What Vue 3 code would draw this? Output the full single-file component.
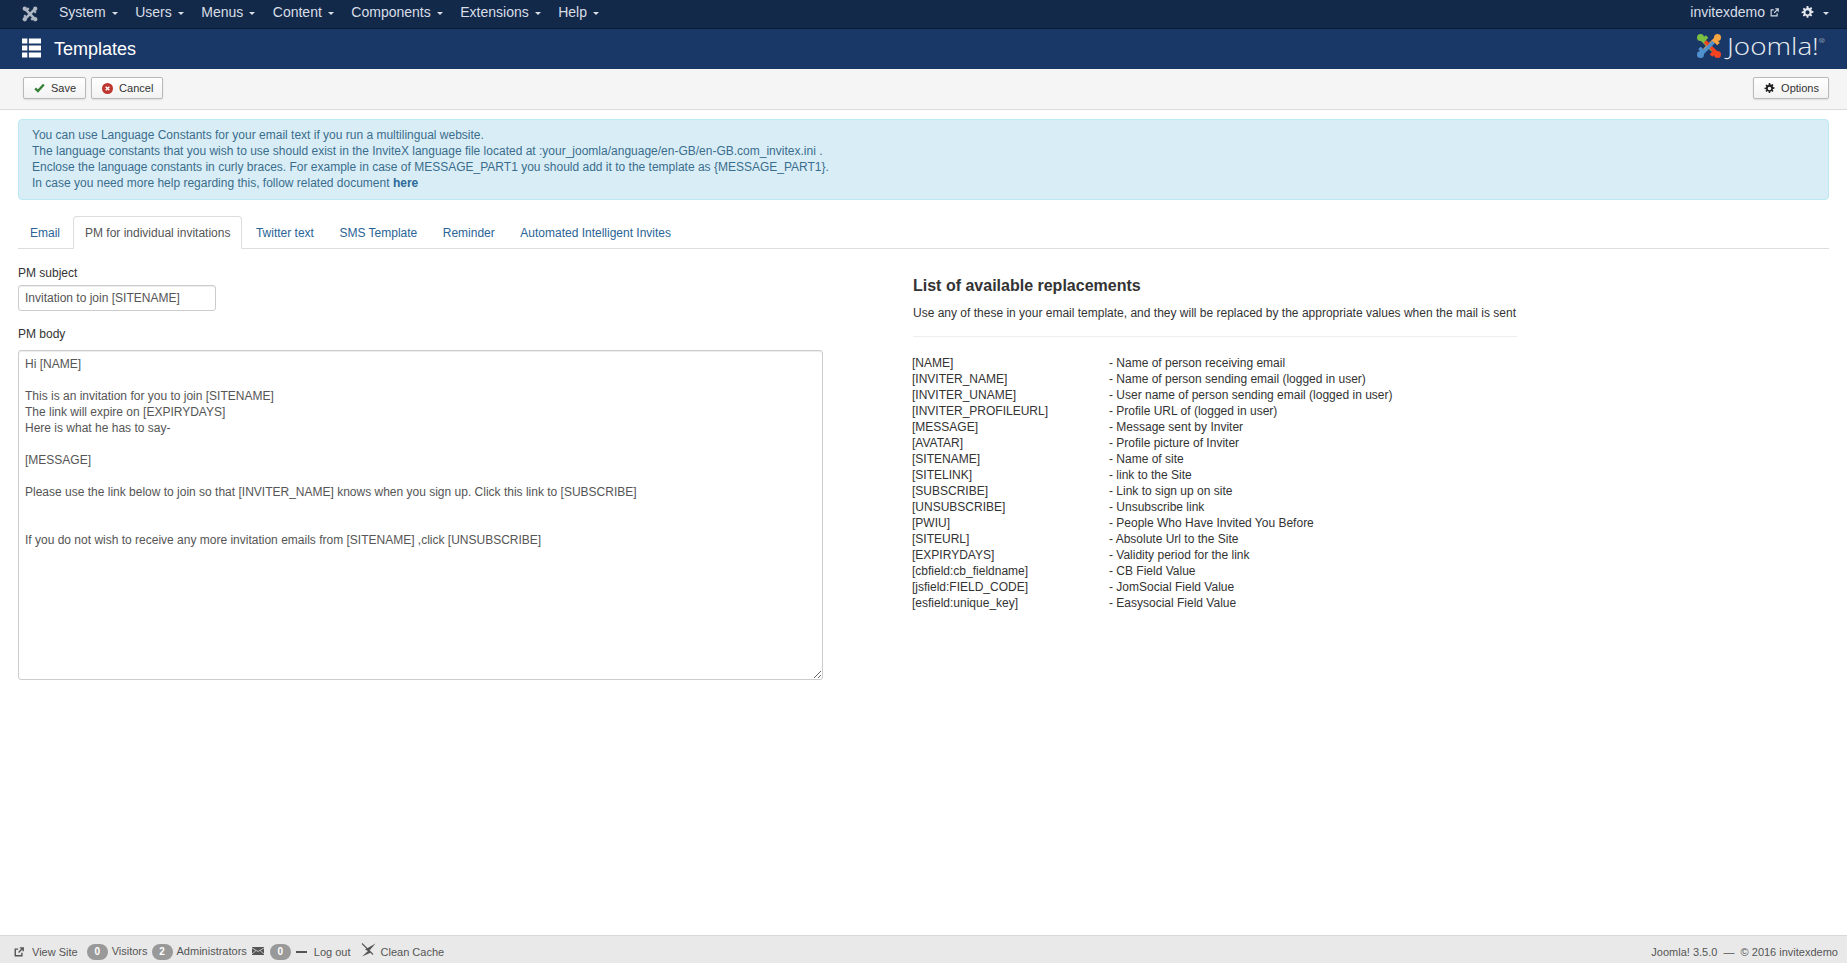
<script setup>
const menus = ['System', 'Users', 'Menus', 'Content', 'Components', 'Extensions', 'Help']
const tabs = ['Email', 'PM for individual invitations', 'Twitter text', 'SMS Template', 'Reminder', 'Automated Intelligent Invites']
const body = `Hi [NAME]

This is an invitation for you to join [SITENAME]
The link will expire on [EXPIRYDAYS]
Here is what he has to say-

[MESSAGE]

Please use the link below to join so that [INVITER_NAME] knows when you sign up. Click this link to [SUBSCRIBE]


If you do not wish to receive any more invitation emails from [SITENAME] ,click [UNSUBSCRIBE]`
const reps = [
  ['[NAME]', '- Name of person receiving email'],
  ['[INVITER_NAME]', '- Name of person sending email (logged in user)'],
  ['[INVITER_UNAME]', '- User name of person sending email (logged in user)'],
  ['[INVITER_PROFILEURL]', '- Profile URL of (logged in user)'],
  ['[MESSAGE]', '- Message sent by Inviter'],
  ['[AVATAR]', '- Profile picture of Inviter'],
  ['[SITENAME]', '- Name of site'],
  ['[SITELINK]', '- link to the Site'],
  ['[SUBSCRIBE]', '- Link to sign up on site'],
  ['[UNSUBSCRIBE]', '- Unsubscribe link'],
  ['[PWIU]', '- People Who Have Invited You Before'],
  ['[SITEURL]', '- Absolute Url to the Site'],
  ['[EXPIRYDAYS]', '- Validity period for the link'],
  ['[cbfield:cb_fieldname]', '- CB Field Value'],
  ['[jsfield:FIELD_CODE]', '- JomSocial Field Value'],
  ['[esfield:unique_key]', '- Easysocial Field Value'],
]
const gear = 'M6.1 0h1.800l.3 1.800 1.100.5L10.800 1.200l1.300 1.300-1.100 1.500.5 1.100 1.800.3v1.800l-1.800.3-.5 1.100 1.100 1.500-1.300 1.300-1.500-1.100-1.100.5-.3 1.800H6.100l-.3-1.800-1.100-.5-1.500 1.100-1.300-1.300 1.100-1.500-.5-1.100L.7 7.800V6l1.800-.3.5-1.100-1.100-1.500 1.300-1.300 1.500 1.100 1.100-.5z'
const hole = 'M7 4.700a2.200 2.200 0 1 0 0 4.400 2.200 2.200 0 0 0 0-4.400z'
const logoArms = [
  { color: '#7ac143', angle: 0 },
  { color: '#f9a541', angle: 90 },
  { color: '#f44321', angle: 180 },
  { color: '#5091cd', angle: 270 },
]
</script>

<template>
  <div class="page">
    <nav class="topnav">
      <svg class="brand" viewBox="0 0 26 26" width="16" height="16" aria-hidden="true">
        <g v-for="a in logoArms" :key="a.angle" :transform="`rotate(${a.angle} 13 13)`">
          <path d="M11 3.500L7 7.500l10 10" fill="none" stroke="#aeb7c3" stroke-width="3.600" />
          <circle cx="4.500" cy="4.500" r="3.500" fill="#aeb7c3" />
        </g>
      </svg>
      <ul class="menu">
        <li v-for="m in menus" :key="m">{{ m }}<span class="caret"></span></li>
      </ul>
      <div class="nav-right">
        <span class="user">invitexdemo
          <svg viewBox="0 0 12 12" width="9" height="9" aria-hidden="true"><path d="M9.500 7v3.500h-8v-8H5M7 1h4v4M11 1L5.500 6.500" fill="none" stroke="#d5dbe3" stroke-width="1.500" /></svg>
        </span>
        <span class="navgear">
          <svg viewBox="0 0 14 14" width="13" height="13" aria-hidden="true"><path fill="#e4e8ee" fill-rule="evenodd" :d="gear + hole" /></svg>
          <span class="caret"></span>
        </span>
      </div>
    </nav>

    <header class="titlebar">
      <svg class="listicon" viewBox="0 0 16 16" width="19" height="20" aria-hidden="true">
        <path fill="#fff" d="M0 0h4.500v4.300H0zM5.800 0H16v4.300H5.800zM0 5.800h4.500v4.400H0zM5.800 5.800H16v4.400H5.800zM0 11.700h4.500V16H0zM5.800 11.700H16V16H5.800z" />
      </svg>
      <h1>Templates</h1>
      <div class="logo">
        <svg viewBox="0 0 26 26" width="26" height="26" aria-hidden="true">
          <g v-for="a in logoArms" :key="a.angle" :transform="`rotate(${a.angle} 13 13)`">
            <path d="M11 3.500L7 7.500l10 10" fill="none" :stroke="a.color" stroke-width="3.600" />
            <circle cx="4.500" cy="4.500" r="3.500" :fill="a.color" />
          </g>
        </svg>
        <span class="logotext">Joomla!<sup>®</sup></span>
      </div>
    </header>

    <div class="toolbar">
      <button class="btn">
        <svg viewBox="0 0 14 12" width="11" height="10" aria-hidden="true"><path d="M1.500 6.500L5 10l7.500-8.500" fill="none" stroke="#378137" stroke-width="3" /></svg>
        Save
      </button>
      <button class="btn">
        <svg viewBox="0 0 12 12" width="11" height="11" aria-hidden="true"><circle cx="6" cy="6" r="6" fill="#bd362f" /><path d="M4 4l4 4M8 4l-4 4" stroke="#fff" stroke-width="1.600" /></svg>
        Cancel
      </button>
      <button class="btn options">
        <svg viewBox="0 0 14 14" width="11" height="11" aria-hidden="true"><path fill="#222" fill-rule="evenodd" :d="gear + hole" /></svg>
        Options
      </button>
    </div>

    <main class="content">
      <div class="alert">
        <div>You can use Language Constants for your email text if you run a multilingual website.</div>
        <div>The language constants that you wish to use should exist in the InviteX language file located at :your_joomla/anguage/en-GB/en-GB.com_invitex.ini .</div>
        <div>Enclose the language constants in curly braces. For example in case of MESSAGE_PART1 you should add it to the template as {MESSAGE_PART1}.</div>
        <div>In case you need more help regarding this, follow related document <a>here</a></div>
      </div>

      <ul class="tabs">
        <li v-for="(t, i) in tabs" :key="t" :class="{ active: i === 1 }">{{ t }}</li>
      </ul>

      <div class="columns">
        <section class="left">
          <label>PM subject</label>
          <input class="subject" type="text" value="Invitation to join [SITENAME]" />
          <label class="second">PM body</label>
          <textarea class="bodytext" :value="body"></textarea>
        </section>
        <section class="right">
          <h2>List of available replacements</h2>
          <p>Use any of these in your email template, and they will be replaced by the appropriate values when the mail is sent</p>
          <hr />
          <div class="reps">
            <template v-for="r in reps" :key="r[0]">
              <span>{{ r[0] }}</span><span>{{ r[1] }}</span>
            </template>
          </div>
        </section>
      </div>
    </main>

    <footer class="status">
      <span class="item">
        <svg viewBox="0 0 12 12" width="10" height="10" aria-hidden="true"><path d="M9.500 7v3.500h-8v-8H5M7 1h4v4M11 1L5.500 6.500" fill="none" stroke="#555" stroke-width="1.700" /></svg>
        <span class="vs">View Site</span>
      </span>
      <span class="badge b1">0</span><span class="up t1">Visitors</span>
      <span class="badge b2">2</span><span class="up t2">Administrators</span>
      <svg class="mail" viewBox="0 0 12 8" width="12" height="8" aria-hidden="true"><path fill="#555" d="M0 0h12v8H0z" /><path d="M0 1l6 3.500L12 1M0 7l4-3.500M12 7L8 3.500" fill="none" stroke="#e9e9e9" stroke-width=".7" /></svg>
      <span class="badge b3">0</span>
      <span class="minus"></span>
      <span class="logout">Log out</span>
      <svg class="broom" viewBox="0 0 15 14" width="15" height="14" aria-hidden="true"><path d="M14.500 .5L4 6.500l3 1.500-6 5.500 9-4 -1.500-2z" fill="#555" /><path d="M1 .5l11 11" stroke="#555" stroke-width="1.100" /></svg>
      <span class="clean">Clean Cache</span>
      <span class="copy">Joomla! 3.5.0 &nbsp;—&nbsp; © 2016 invitexdemo</span>
    </footer>
  </div>
</template>

<style>
html, body { margin: 0; padding: 0; background: #fff; }
</style>

<style scoped>
* { box-sizing: border-box; }
.page {
  height: 963px; display: flex; flex-direction: column; overflow: hidden;
  font-family: "Liberation Sans", Arial, sans-serif; font-size: 12px; line-height: 16px; color: #333;
}
.topnav {
  height: 29px; flex: none; display: flex; align-items: center; padding: 0 0 4px 22px;
  background: #13294a; border-bottom: 1px solid #0c1c35; color: #d9dee6; font-size: 14px;
}
.brand { flex: none; margin-top: 3px; }
.menu { list-style: none; display: flex; margin: 0 0 0 21px; padding: 0; gap: 17.5px; }
.menu li { display: flex; align-items: center; }
.caret {
  display: inline-block; margin-left: 6px; margin-top: 2px;
  border-top: 3px solid #d9dee6; border-left: 3px solid transparent; border-right: 3px solid transparent;
}
.nav-right { margin-left: auto; display: flex; align-items: center; padding-right: 18px; }
.user { display: flex; align-items: center; gap: 5px; }
.navgear { display: flex; align-items: center; margin-left: 22px; }
.navgear .caret { margin-left: 9px; }
.titlebar {
  height: 40px; flex: none; display: flex; align-items: center; padding-left: 22px;
  background: #1a3867; color: #fff;
}
.titlebar h1 { margin: 0 0 0 13px; font-size: 18px; line-height: 24px; font-weight: 400; color: #fff; }
.listicon { flex: none; margin-top: -2px; }
.logo { margin-left: auto; margin-top: -6px; display: flex; align-items: center; padding-right: 22px; gap: 5px; }
.logotext {
  display: inline-block; width: 98px; transform: scaleX(1.21); transform-origin: left center;
  font-family: "Open Sans", sans-serif; font-weight: 300; font-size: 23px; line-height: 26px; color: #e8ecf1; white-space: nowrap;
}
.logotext sup { font-size: 6px; vertical-align: 12px; line-height: 0; }
.toolbar {
  height: 41px; flex: none; display: flex; align-items: center; gap: 5px; padding: 0 18px 0 23px;
  background: #f5f5f5; border-bottom: 1px solid #dcdcdc;
}
.btn {
  height: 22px; padding: 0 9px 0 10px; display: inline-flex; align-items: center; gap: 6px;
  font: 11px/16px "Liberation Sans", Arial, sans-serif; color: #333;
  background: linear-gradient(#fff, #f2f2f2); border: 1px solid #b9b9b9; border-radius: 2px;
  box-shadow: 0 1px 2px rgba(0, 0, 0, .1); margin-top: -2px;
}
.options { margin-left: auto; }
.content { flex: 1; padding: 9px 18px 0; }
.alert {
  height: 81px; padding: 7px 13px; background: #d9edf7; border: 1px solid #bce8f1; border-radius: 4px;
  color: #3a6d8c;
}
.alert a { font-weight: 700; color: #2c6a98; }
.tabs {
  list-style: none; display: flex; margin: 16px 0 0; padding: 0; height: 33px;
  border-bottom: 1px solid #ddd; color: #2a6496;
}
.tabs li { padding: 7.500px 12.500px 8px 11px; height: 33px; line-height: 16px; border: 1px solid transparent; border-radius: 4px 4px 0 0; }
.tabs li:first-child { padding-right: 12px; }
.tabs li.active { color: #555; background: #fff; border-color: #ddd #ddd #fff; padding-right: 10.500px; }
.tabs li.active + li { padding-left: 13px; }
.columns { display: flex; }
.left { width: 895px; flex: none; padding-top: 16px; display: flex; flex-direction: column; align-items: flex-start; }
label { display: block; height: 16px; color: #333; }
.subject {
  margin-top: 4px; width: 198px; height: 26px; padding: 4px 6px; font: 12px/16px "Liberation Sans", Arial, sans-serif;
  color: #555; border: 1px solid #ccc; border-radius: 3px; box-shadow: inset 0 1px 1px rgba(0, 0, 0, .075); outline: none;
}
.second { margin-top: 15px; }
.bodytext {
  margin-top: 8px; width: 805px; height: 330px; padding: 5px 6px; font: 12px/16px "Liberation Sans", Arial, sans-serif;
  color: #555; border: 1px solid #ccc; border-radius: 3px; box-shadow: inset 0 1px 1px rgba(0, 0, 0, .075); outline: none; resize: both;
}
.right { padding-top: 26px; width: 604px; }
h2 { margin: 0; font-size: 16px; line-height: 22px; font-weight: 700; color: #333; }
p { margin: 8px 0 0; }
hr { margin: 15px 0 0; border: 0; border-top: 1px solid #eee; }
.reps { margin-top: 18px; margin-left: -1px; display: grid; grid-template-columns: 197px 1fr; line-height: 16px; }
.status {
  height: 28px; flex: none; display: flex; align-items: center; padding: 5px 9px 0 14px;
  background: #e9e9e9; border-top: 1px solid #d8d8d8; color: #555; font-size: 11px; white-space: nowrap;
}
.item { display: flex; align-items: center; gap: 8px; }
.badge {
  display: inline-block; width: 21px; height: 16px; line-height: 16px; text-align: center;
  background: #999; color: #fff; border-radius: 9px; font-size: 10px; font-weight: 700;
}
.b1 { margin-left: 9px; }
.up { margin-top: -2px; }
.t1 { margin-left: 4px; }
.b2 { margin-left: 4px; }
.t2 { margin-left: 4px; }
.mail { margin-left: 5px; margin-top: -3px; }
.b3 { margin-left: 6px; }
.minus { width: 11px; height: 2px; background: #555; margin-left: 5px; }
.logout { margin-left: 7px; }
.broom { margin-left: 10px; margin-top: -5px; }
.clean { margin-left: 5px; }
.copy { margin-left: auto; }
</style>
